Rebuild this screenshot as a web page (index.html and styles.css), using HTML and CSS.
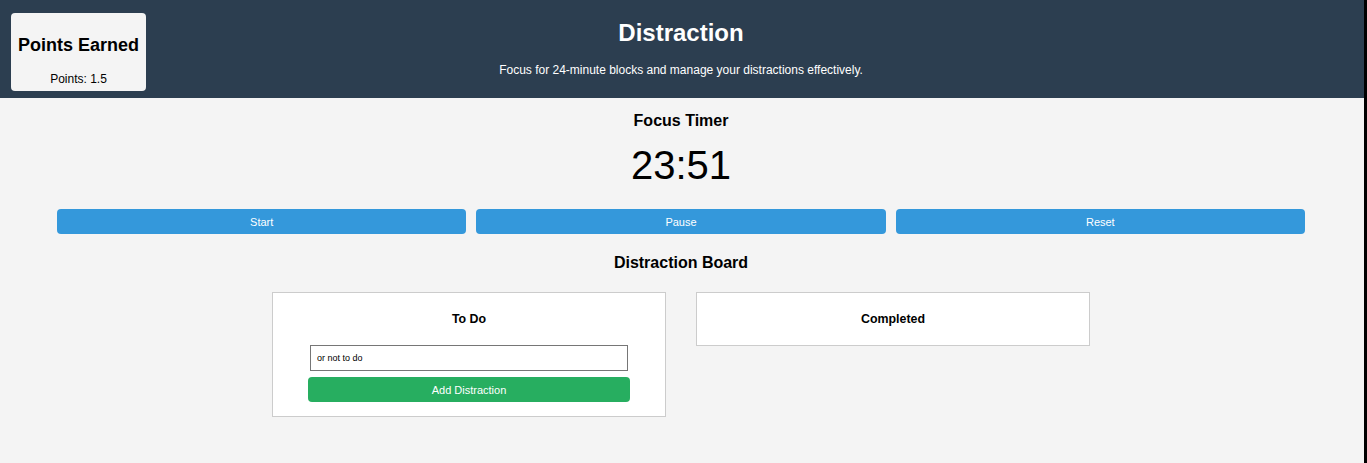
FILE: index.html
```html
<!DOCTYPE html>
<html lang="en">
<head>
<meta charset="utf-8">
<title>Distraction</title>
<link rel="stylesheet" href="styles.css">
</head>
<body>
<div class="page">
  <header class="header">
    <div class="points">
      <h2 class="points-title">Points Earned</h2>
      <p class="points-value">Points: 1.5</p>
    </div>
    <h1 class="title">Distraction</h1>
    <p class="subtitle">Focus for 24-minute blocks and manage your distractions effectively.</p>
  </header>
  <main class="main">
    <section class="timer">
      <h2 class="section-title">Focus Timer</h2>
      <div class="clock">23:51</div>
      <div class="controls">
        <button class="btn">Start</button>
        <button class="btn">Pause</button>
        <button class="btn">Reset</button>
      </div>
    </section>
    <section class="board">
      <h2 class="section-title board-title">Distraction Board</h2>
      <div class="columns">
        <div class="card">
          <h3 class="card-title">To Do</h3>
          <div class="add-form">
            <input class="input" type="text" value="or not to do">
            <button class="btn-add">Add Distraction</button>
          </div>
        </div>
        <div class="card">
          <h3 class="card-title">Completed</h3>
        </div>
      </div>
    </section>
  </main>
</div>
</body>
</html>
```
FILE: styles.css
```css
html {
  background: #000;
}
body {
  margin: 0;
  font-family: "Liberation Sans", Arial, sans-serif;
}
.page {
  width: 1364px;
  min-height: 463px;
  background: #f4f4f4;
}
.header {
  position: relative;
  background: #2c3e50;
  color: #fff;
  height: 98px;
  box-sizing: border-box;
  padding: 19px 2px 0 0;
  text-align: center;
}
.title {
  margin: 0;
  font-size: 24px;
  line-height: 28px;
  font-weight: bold;
}
.subtitle {
  margin: 16px 0 0;
  font-size: 12px;
  line-height: 14px;
}
.points {
  position: absolute;
  left: 11px;
  top: 13px;
  width: 135px;
  height: 78px;
  background: #f4f4f4;
  color: #000;
  border-radius: 4px;
  display: flex;
  flex-direction: column;
  align-items: center;
}
.points-title {
  margin: 22px 0 0;
  font-size: 18px;
  line-height: 20px;
  font-weight: bold;
}
.points-value {
  margin: 17px 0 0;
  font-size: 12px;
  line-height: 14px;
}
.main {
  padding-right: 2px;
  display: flex;
  flex-direction: column;
  align-items: center;
}
.timer {
  width: 1248px;
  display: flex;
  flex-direction: column;
  align-items: center;
}
.section-title {
  margin: 0;
  font-size: 16px;
  line-height: 18px;
  font-weight: bold;
  color: #000;
}
.timer .section-title {
  margin-top: 14px;
}
.clock {
  margin-top: 12px;
  font-size: 40px;
  line-height: 46px;
}
.controls {
  margin-top: 21px;
  width: 100%;
  display: flex;
  gap: 10px;
}
.btn {
  flex: 1;
  height: 25px;
  border: none;
  border-radius: 4px;
  background: #3498db;
  color: #fff;
  font-family: "Liberation Sans", Arial, sans-serif;
  font-size: 11px;
  padding: 0;
}
.board {
  display: flex;
  flex-direction: column;
  align-items: center;
}
.board-title {
  margin-top: 20px;
}
.columns {
  margin-top: 20px;
  display: flex;
  gap: 30px;
  align-items: flex-start;
}
.card {
  width: 394px;
  box-sizing: border-box;
  background: #fff;
  border: 1px solid #ccc;
  padding: 19px 0 18px;
  display: flex;
  flex-direction: column;
  align-items: center;
}
.card-title {
  margin: 0;
  font-size: 12.4px;
  line-height: 15px;
  font-weight: bold;
}
.add-form {
  margin-top: 18px;
  display: flex;
  flex-direction: column;
  align-items: center;
  gap: 6px;
  margin-bottom: -4px;
}
.input {
  width: 318px;
  height: 26px;
  box-sizing: border-box;
  border: 1px solid #767676;
  padding: 0 6px;
  font-family: "Liberation Sans", Arial, sans-serif;
  font-size: 9px;
  color: #000;
  background: #fff;
  margin: 0;
}
.btn-add {
  width: 322px;
  height: 25px;
  border: none;
  border-radius: 4px;
  background: #27ae60;
  color: #fff;
  font-family: "Liberation Sans", Arial, sans-serif;
  font-size: 11px;
  padding: 0;
}
```
